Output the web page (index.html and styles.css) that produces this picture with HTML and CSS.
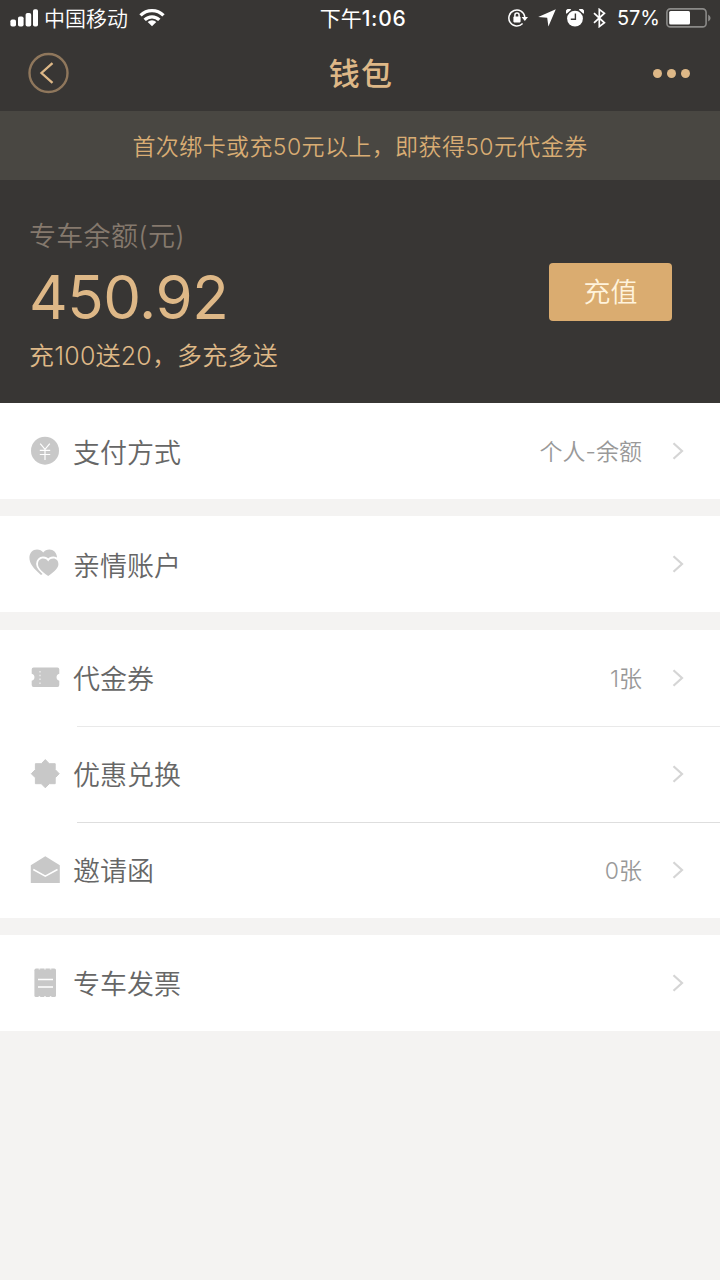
FILE: index.html
```html
<!DOCTYPE html>
<html lang="zh-CN">
<head>
    <meta charset="UTF-8">
    <meta name="viewport" content="width=device-width, initial-scale=1.0">
    <title>钱包</title>
    <link rel="stylesheet" href="styles.css">
</head>
<body>
    <header>
        <div class="status-bar">
            <div class="status-left">
                <svg class="signal" width="28" height="18" viewBox="0 0 28 18" fill="#fff">
                    <rect x="0.4" y="10.5" width="5.6" height="7" rx="1.8"/>
                    <rect x="8" y="7.5" width="5.6" height="10" rx="1.8"/>
                    <rect x="15.6" y="4" width="5.6" height="13.5" rx="1.8"/>
                    <rect x="23" y="0.3" width="5" height="17.2" rx="1.8"/>
                </svg>
                <span class="carrier">中国移动</span>
                <svg class="wifi" width="26" height="18" viewBox="0 0 26 18" fill="none" stroke="#fff" stroke-width="3.3">
                    <path d="M1.5 6.4A16.3 16.3 0 0 1 24.5 6.4"/>
                    <path d="M5.7 10.9A10.3 10.3 0 0 1 20.3 10.9"/>
                    <path d="M13 17.3L8.7 13.1A6 6 0 0 1 17.3 13.1Z" fill="#fff" stroke="none"/>
                </svg>
            </div>
            <span class="clock">下午<b>1:06</b></span>
            <div class="status-right">
                <svg class="lock" width="20" height="18" viewBox="0 0 20 18" fill="none" stroke="#fff" stroke-width="1.5">
                    <path d="M16.8 8A8 8 0 1 0 14.6 14.6"/>
                    <path d="M13.6 8H20L16.8 12Z" fill="#fff" stroke="none"/>
                    <rect x="5.4" y="7.6" width="7.2" height="5.8" rx="0.8" fill="#fff" stroke="none"/>
                    <path d="M6.9 8V6.2a2.1 2.1 0 0 1 4.2 0V8"/>
                </svg>
                <svg class="location" width="18" height="18" viewBox="0 0 18 18" fill="#fff">
                    <path d="M17.8 .2L10.4 17.5L9.2 8.8L.2 8Z"/>
                </svg>
                <svg class="alarm" width="18" height="18" viewBox="0 0 18 18">
                    <circle cx="9" cy="9.6" r="7.9" fill="#fff"/>
                    <path d="M.6 4.8A3 3 0 0 1 5.2 .8ZM17.4 4.8A3 3 0 0 0 12.8 .8Z" fill="#fff"/>
                    <path d="M9.4 4.6V10.2H4.8" fill="none" stroke="#383634" stroke-width="1.4"/>
                </svg>
                <svg class="bluetooth" width="13" height="20" viewBox="0 0 13 20" fill="none" stroke="#fff" stroke-width="1.7">
                    <path d="M1 5.2L11.4 14.8L6.3 18.6V1.4L11.4 5.2L1 14.8"/>
                </svg>
                <span class="percent">57%</span>
                <svg class="battery" width="45" height="20" viewBox="0 0 45 20">
                    <rect x=".9" y=".9" width="39.2" height="18" rx="3.5" fill="none" stroke="#8b8a88" stroke-width="1.6"/>
                    <rect x="3.2" y="3.1" width="20.8" height="13.5" rx="1.5" fill="#fff"/>
                    <path d="M42.2 6.5Q44.6 8 44.6 10T42.2 13.5Z" fill="#8b8a88"/>
                </svg>
            </div>
        </div>
        <nav>
            <svg class="back" width="42" height="42" viewBox="0 0 42 42" fill="none">
                <circle cx="21.5" cy="21" r="19" stroke="#8f775c" stroke-width="2.4"/>
                <path d="M25.5 11.2L14.5 21L25.5 30.8" stroke="#deb887" stroke-width="2.3"/>
            </svg>
            <h1>钱包</h1>
            <div class="more"><i></i><i></i><i></i></div>
        </nav>
        <div class="notice">首次绑卡或充50元以上，即获得50元代金券</div>
        <div class="balance">
            <div class="balance-info">
                <div class="balance-label">专车余额(元)</div>
                <div class="balance-amount">450.92</div>
                <div class="balance-tip">充100送20，多充多送</div>
            </div>
            <button class="recharge">充值</button>
        </div>
    </header>

    <main>
        <section class="group">
            <a class="row">
                <svg class="icon" width="32" height="32" viewBox="0 0 32 32">
                    <circle cx="16" cy="15.7" r="14" fill="#c8c8c8"/>
                    <path d="M11.2 8.6L16 14.4L20.8 8.6M16 14.4V25M10.8 15.3H21.2M10.8 19.5H21.2" fill="none" stroke="#fff" stroke-width="1.2"/>
                </svg>
                <span class="name">支付方式</span>
                <span class="value">个人-余额</span>
                <svg class="arrow" width="12" height="18" viewBox="0 0 12 18"><path d="M1.5 1.2L10 9L1.5 16.8"/></svg>
            </a>
        </section>
        <section class="group">
            <a class="row">
                <svg class="icon" width="32" height="32" viewBox="0 0 32 32" fill="#c8c8c8">
                    <path d="M12 27C4.5 20.5 .4 15.5 .4 9.8C.4 4.8 3.8 1.4 8 1.4C10.6 1.4 12.8 2.5 14.2 4.4C15.6 2.5 17.8 1.4 20.4 1.4C24.4 1.4 27.6 4.4 28 9C28 15 22 21 12 27Z"/>
                    <path d="M19.2 28C12 22.9 9 19.8 9 16C9 12.6 11.2 10.4 14 10.4C16.4 10.4 18.2 11.6 19.2 13.4C20.2 11.6 22 10.4 24.4 10.4C27.2 10.4 29.4 12.6 29.4 16C29.4 19.8 26.4 22.9 19.2 28Z" stroke="#fff" stroke-width="3.8" paint-order="stroke"/>
                </svg>
                <span class="name">亲情账户</span>
                <svg class="arrow" width="12" height="18" viewBox="0 0 12 18"><path d="M1.5 1.2L10 9L1.5 16.8"/></svg>
            </a>
        </section>
        <section class="group">
            <a class="row">
                <svg class="icon" width="32" height="32" viewBox="0 0 32 32">
                    <path d="M4.5 5.6H28.5Q30.3 5.6 30.3 7.6V11.8A3.6 3.6 0 0 0 30.3 18.8V23.1Q30.3 25.1 28.5 25.1H4.5Q2.7 25.1 2.7 23.1V18.8A3.6 3.6 0 0 0 2.7 11.8V7.6Q2.7 5.6 4.5 5.6Z" fill="#c8c8c8"/>
                    <path d="M11 9V23" stroke="#eee" stroke-width="1.3" stroke-dasharray="1.5 2.3"/>
                </svg>
                <span class="name">代金券</span>
                <span class="value">1张</span>
                <svg class="arrow" width="12" height="18" viewBox="0 0 12 18"><path d="M1.5 1.2L10 9L1.5 16.8"/></svg>
            </a>
            <a class="row line light">
                <svg class="icon" width="32" height="32" viewBox="0 0 32 32">
                    <path d="M16.3 1.6L20.3 5.7H26.2V11.6L30.2 15.7L26.2 19.8V25.7H20.3L16.3 29.8L12.3 25.7H6.4V19.8L2.3 15.7L6.4 11.6V5.7H12.3Z" fill="#c8c8c8" stroke="#c8c8c8" stroke-linejoin="round"/>
                </svg>
                <span class="name">优惠兑换</span>
                <svg class="arrow" width="12" height="18" viewBox="0 0 12 18"><path d="M1.5 1.2L10 9L1.5 16.8"/></svg>
            </a>
            <a class="row line">
                <svg class="icon" width="32" height="32" viewBox="0 0 32 32">
                    <path d="M1.8 11.3L16.3 2.2L30.8 11.3V29H1.8Z" fill="#c8c8c8"/>
                    <path d="M4.3 15.5L16.3 22.2L28.5 15.5" fill="none" stroke="#fff" stroke-width="1.5"/>
                </svg>
                <span class="name">邀请函</span>
                <span class="value">0张</span>
                <svg class="arrow" width="12" height="18" viewBox="0 0 12 18"><path d="M1.5 1.2L10 9L1.5 16.8"/></svg>
            </a>
        </section>
        <section class="group">
            <a class="row">
                <svg class="icon" width="32" height="32" viewBox="0 0 32 32">
                    <rect x="5.4" y="1.6" width="21.6" height="28.4" rx="1.6" fill="#c8c8c8"/>
                    <path d="M9.6 1.9H25M9.6 29.7H25" stroke="#fff" stroke-width="1" stroke-dasharray="1.6 4"/>
                    <path d="M9 12.5H24M9 20H24" stroke="#fff" stroke-width="1.4"/>
                </svg>
                <span class="name">专车发票</span>
                <svg class="arrow" width="12" height="18" viewBox="0 0 12 18"><path d="M1.5 1.2L10 9L1.5 16.8"/></svg>
            </a>
        </section>
    </main>
</body>
</html>
```
FILE: styles.css
```css
* { box-sizing: border-box; }
body {
    margin: 0;
    font-family: Inter, 'Noto Sans CJK SC', sans-serif;
    font-weight: 350;
    background-color: #f4f3f2;
    min-height: 100vh;
}
svg {
    display: block;
    flex-shrink: 0;
}
header {
    background-color: #383634;
    color: #deb887;
}
.status-bar {
    display: grid;
    grid-template-columns: 1fr auto 1fr;
    align-items: center;
    height: 36px;
    padding: 0 9px 0 10px;
    color: #fff;
    font-size: 20px;
    line-height: 36px;
}
.status-left, .status-right {
    display: flex;
    align-items: center;
}
.status-right {
    justify-content: flex-end;
}
.carrier {
    margin: 0 11px 0 6px;
    padding-top: 1px;
    line-height: 35px;
    font-size: 21px;
}
.clock {
    padding-left: 5px;
    padding-top: 1px;
    line-height: 35px;
    font-size: 21px;
    font-weight: 400;
}
.clock b {
    font-weight: 500;
    letter-spacing: 0.7px;
}
.location {
    margin-left: 10px;
}
.alarm {
    margin-left: 10px;
}
.bluetooth {
    margin-left: 9px;
}
.percent {
    margin: 0 6px 0 11px;
    padding-top: 1px;
    line-height: 35px;
    font-weight: 400;
}
nav {
    display: flex;
    align-items: center;
    justify-content: space-between;
    height: 75px;
    padding: 0 30px 2px 27px;
}
nav h1 {
    margin: 0;
    padding-top: 2px;
    font-size: 31px;
    font-weight: 500;
    line-height: 44px;
    letter-spacing: 1.2px;
}
.more {
    display: flex;
    gap: 5px;
    padding-top: 1px;
}
.more i {
    width: 9px;
    height: 9px;
    border-radius: 50%;
    background-color: #deb887;
}
.notice {
    height: 69px;
    background-color: #494742;
    color: #d9ad74;
    font-size: 23px;
    line-height: 72px;
    letter-spacing: 0.4px;
    text-align: center;
}
.balance {
    display: flex;
    align-items: center;
    justify-content: space-between;
    height: 223px;
    padding: 0 48px 0 29px;
}
.balance-info {
    padding-top: 8px;
}
.balance-label {
    color: #85796d;
    font-size: 27px;
    line-height: 38px;
    letter-spacing: 0.3px;
}
.balance-amount {
    font-size: 60px;
    font-weight: 400;
    line-height: 82px;
    letter-spacing: -0.5px;
}
.balance-tip {
    font-size: 25px;
    line-height: 36px;
    letter-spacing: 0.2px;
}
.recharge {
    width: 123px;
    height: 58px;
    padding: 0 0 2px;
    border: 0;
    border-radius: 4px;
    background-color: #daac70;
    color: #fff3dc;
    font: inherit;
    font-size: 27px;
}
.group {
    background-color: #fff;
    margin-bottom: 17.33px;
}
.row {
    display: flex;
    align-items: center;
    height: 96px;
    padding: 0 36px 0 29px;
}
.line {
    background: linear-gradient(#dedede, #dedede) 77px 0 / 100% 1px no-repeat;
}
.light {
    background-image: linear-gradient(#e9e9e9, #e9e9e9);
}
.name {
    flex: 1;
    margin-left: 12px;
    color: #666;
    font-size: 27px;
}
.value {
    margin-right: 30px;
    padding-bottom: 2px;
    color: #999;
    font-size: 23px;
}
.arrow {
    fill: none;
    stroke: #d5d5d5;
    stroke-width: 2.2;
}
```
